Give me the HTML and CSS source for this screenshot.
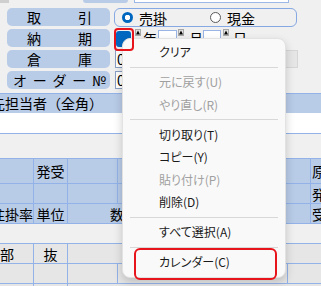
FILE: index.html
```html
<!DOCTYPE html>
<html lang="ja">
<head>
  <meta charset="UTF-8">
  <meta name="viewport" content="width=device-width, initial-scale=1.0">
  <title>受注入力</title>
  <link rel="stylesheet" href="styles.css">
</head>
<body>
<div class="screen">
  <div class="stub">
    <span class="stub-grey"></span>
    <span class="stub-label"></span>
    <span class="stub-input"></span>
  </div>

  <div class="form">
    <div class="row">
      <div class="label"><span>取</span><span>引</span></div>
      <div class="radio-group">
        <label class="radio"><span class="dot on"></span>売掛</label>
        <label class="radio"><span class="dot"></span>現金</label>
      </div>
    </div>
    <div class="row">
      <div class="label"><span>納</span><span>期</span></div>
      <span class="check"></span>
      <svg class="spin s1" width="6" height="7" viewBox="0 0 6 7"><rect x="0.5" y="0.5" width="5" height="6" fill="#e3e3e3" stroke="#a8a8a8"/><path d="M1 5.5h4L3 1.5z" fill="#000"/></svg>
      <span class="unit u1">年</span>
      <span class="box b1"></span>
      <svg class="spin s2" width="6" height="7" viewBox="0 0 6 7"><rect x="0.5" y="0.5" width="5" height="6" fill="#e3e3e3" stroke="#a8a8a8"/><path d="M1 5.5h4L3 1.5z" fill="#000"/></svg>
      <span class="unit u2">月</span>
      <span class="box b2"></span>
      <svg class="spin s3" width="6" height="7" viewBox="0 0 6 7"><rect x="0.5" y="0.5" width="5" height="6" fill="#e3e3e3" stroke="#a8a8a8"/><path d="M1 5.5h4L3 1.5z" fill="#000"/></svg>
      <span class="unit u3">日</span>
    </div>
    <div class="row">
      <div class="label"><span>倉</span><span>庫</span></div>
      <span class="input">0001</span>
      <span class="input-off"></span>
    </div>
    <div class="row">
      <div class="label wide"><span>オ</span><span>ー</span><span>ダ</span><span>ー</span><span>№</span></div>
      <span class="input">0</span>
    </div>
  </div>

  <div class="title-bar"><span>先担当者（全角）</span></div>
  <div class="white-row"></div>
  <div class="gap"></div>

  <div class="head">
    <div class="hrow r0">
      <div class="cell"></div>
      <div class="cell">発受</div>
      <div class="cell"></div>
      <div class="cell"></div>
      <div class="cell left">原</div>
    </div>
    <div class="hrow r1">
      <div class="cell"></div>
      <div class="cell"></div>
      <div class="cell"></div>
      <div class="cell"></div>
      <div class="cell left">発</div>
    </div>
    <div class="hrow r2">
      <div class="cell right">注掛率</div>
      <div class="cell">単位</div>
      <div class="cell qty">数量</div>
      <div class="cell left">受</div>
    </div>
  </div>

  <div class="gap2"></div>

  <div class="body">
    <div class="brow b-r0">
      <div class="cell left">部</div>
      <div class="cell">抜</div>
      <div class="cell"></div>
    </div>
    <div class="brow b-r1">
      <div class="cell"></div>
      <div class="cell"></div>
      <div class="cell"></div>
      <div class="cell"></div>
      <div class="cell"></div>
    </div>
    <div class="brow b-r2">
      <div class="cell"></div>
      <div class="cell"></div>
      <div class="cell"></div>
    </div>
  </div>

  <div class="menu">
    <div class="item">クリア</div>
    <div class="sep"></div>
    <div class="item off">元に戻す(U)</div>
    <div class="item off">やり直し(R)</div>
    <div class="sep"></div>
    <div class="item">切り取り(T)</div>
    <div class="item">コピー(Y)</div>
    <div class="item off">貼り付け(P)</div>
    <div class="item">削除(D)</div>
    <div class="sep"></div>
    <div class="item">すべて選択(A)</div>
    <div class="sep"></div>
    <div class="item">カレンダー(C)</div>
  </div>

  <div class="mark mark-check"></div>
  <div class="mark mark-cal"></div>
</div>
</body>
</html>
```

FILE: styles.css
```css
body {
  margin: 0;
  background: #f0f0f0;
  font-family: "Noto Sans CJK JP", sans-serif;
  color: #000;
}
.screen {
  position: relative;
  width: 321px;
  height: 286px;
  overflow: hidden;
}

/* edge of the row above */
.stub {
  display: flex;
  height: 3px;
}
.stub-grey {
  width: 9px;
  background: #cfcfcf;
}
.stub-label {
  width: 45px;
  margin-left: 74px;
  background: #b8cbe7;
  border-radius: 0 0 4px 4px;
}
.stub-input {
  width: 155px;
  margin-left: 6px;
  box-sizing: border-box;
  background: #fff;
  border: 1px solid #9db8e6;
  border-top: none;
}

/* form rows */
.form {
  display: flex;
  flex-direction: column;
  gap: 3px;
  padding: 5px 0 0 7px;
}
.row {
  display: flex;
  align-items: flex-start;
  height: 18px;
}
.label {
  flex: none;
  width: 103px;
  height: 18px;
  box-sizing: border-box;
  padding: 0 18px 0 20px;
  display: flex;
  justify-content: space-between;
  align-items: center;
  background: #b8cbe7;
  border-radius: 5px;
  font-size: 14px;
  line-height: 18px;
}
.label.wide {
  padding: 0 4px 0 6px;
}
.radio-group {
  margin-left: 4px;
  width: 183px;
  height: 19px;
  box-sizing: border-box;
  border: 1px solid #86a8e3;
  border-radius: 6px;
  display: flex;
  align-items: center;
  padding-left: 7px;
  font-size: 14px;
}
.radio {
  display: flex;
  align-items: center;
  gap: 6px;
}
.radio + .radio {
  margin-left: 43px;
}
.dot {
  width: 11px;
  height: 11px;
  box-sizing: border-box;
  border-radius: 50%;
  border: 1px solid #5a5a5a;
  background: #fff;
}
.dot.on {
  border: none;
  background: radial-gradient(circle, #fff 2.5px, #0067c0 3px);
}

.check {
  flex: none;
  width: 15px;
  height: 16px;
  margin: 2px 0 0 6px;
  background: #0067c0;
  border-radius: 3px;
}
.spin {
  flex: none;
  display: block;
}
.s1 { margin-left: 4px; }
.s2 { margin-left: 1px; }
.s3 { margin-left: 2px; }
.unit {
  font-size: 14px;
  line-height: 18px;
}
.u1 { margin-left: 2px; }
.u2 { margin-left: 5px; }
.u3 { margin-left: 4px; }
.box {
  flex: none;
  height: 17px;
  box-sizing: border-box;
  margin-top: 1px;
  background: #fff;
  border: 1px solid #9ab5e5;
}
.b1 { width: 19px; margin-left: 1px; }
.b2 { width: 18px; }

.input {
  flex: none;
  width: 100px;
  height: 18px;
  margin-left: 5px;
  box-sizing: border-box;
  padding-left: 1px;
  background: #fff;
  border: 1px solid #8a9fc4;
  font-size: 14px;
  line-height: 16px;
}
.input-off {
  flex: none;
  width: 48px;
  height: 18px;
  margin-left: 35px;
  box-sizing: border-box;
  background: #e6e6e6;
  border: 1px solid #d6d6d6;
}

/* lower block */
.title-bar {
  margin-top: 4px;
  height: 19px;
  border-top: 1px solid #92b2e8;
  background: #b8cbe7;
  font-size: 14px;
  line-height: 19px;
  white-space: nowrap;
  overflow: hidden;
}
.title-bar span {
  margin-left: -9px;
}
.white-row {
  height: 20px;
  background: #fff;
  border-bottom: 1px solid #92b2e8;
}
.gap {
  height: 24px;
}
.head {
  border-top: 1px solid #92b2e8;
  background: #b8cbe7;
}
.hrow, .brow {
  display: grid;
  height: 20px;
  box-sizing: border-box;
  border-bottom: 1px solid #92b2e8;
  font-size: 14px;
}
.hrow.r0 { height: 25px; }
.r0, .r1 { grid-template-columns: 34px 34px 50px 193px 1fr; }
.r2 { grid-template-columns: 34px 34px 243px 1fr; }
.cell {
  display: flex;
  align-items: center;
  justify-content: center;
  border-right: 1px solid #92b2e8;
  overflow: hidden;
  white-space: nowrap;
}
.cell:last-child {
  border-right: none;
}
.cell.left {
  justify-content: flex-start;
  padding-left: 1px;
}
.cell.right {
  justify-content: flex-end;
}
.cell.qty {
  justify-content: flex-start;
  padding-left: 42px;
}
.gap2 {
  height: 19px;
}
.body {
  border-top: 1px solid #92b2e8;
  background: #e6e6e6;
}
.b-r0, .b-r2 { grid-template-columns: 34px 34px 1fr; }
.b-r1 { grid-template-columns: 34px 34px 50px 170px 1fr; }
.b-r0 .cell.left { padding-left: 0; }

/* context menu */
.menu {
  position: absolute;
  left: 122px;
  top: 38px;
  width: 164px;
  box-sizing: border-box;
  padding: 2px 0 3px;
  background: #f9f9f9;
  border: 1px solid #e2e2e2;
  border-radius: 8px;
  box-shadow: 0 4px 10px rgba(0, 0, 0, 0.18);
  font-size: 12px;
  font-feature-settings: "palt";
}
.item {
  height: 22.5px;
  line-height: 22.5px;
  padding-left: 36px;
  color: #1a1a1a;
}
.item.off {
  color: #a0a0a0;
}
.sep {
  height: 1px;
  margin: 3.25px 7px 3.25px 7px;
  background: #d8d8d8;
}

/* red highlight marks */
.mark {
  position: absolute;
  box-sizing: border-box;
  border: 2px solid #e8141b;
  border-radius: 4px;
}
.mark-check {
  left: 114px;
  top: 28px;
  width: 20px;
  height: 23px;
}
.mark-cal {
  left: 134px;
  top: 248px;
  width: 143px;
  height: 32px;
  border-radius: 6px;
}
```
